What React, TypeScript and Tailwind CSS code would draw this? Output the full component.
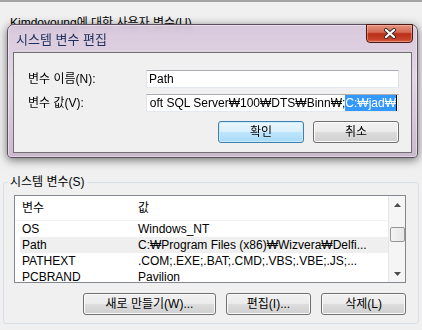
import React from 'react'

type Row = { name: string; value: string; selected?: boolean }

const rows: Row[] = [
  { name: 'OS', value: 'Windows_NT' },
  { name: 'Path', value: 'C:₩Program Files (x86)₩Wizvera₩Delfi...', selected: true },
  { name: 'PATHEXT', value: '.COM;.EXE;.BAT;.CMD;.VBS;.VBE;.JS;...' },
  { name: 'PCBRAND', value: 'Pavilion' },
]

function WinButton({ label, primary }: { label: string; primary?: boolean }) {
  return (
    <button
      className={`block h-[22px] w-full whitespace-nowrap rounded-[3px] border text-[12px] leading-[20px] text-black ${
        primary
          ? 'border-[#3c7fb1] bg-[linear-gradient(to_bottom,#eaf6fd_0%,#d9f0fc_50%,#bee6fd_50%,#a7d9f5_100%)] shadow-[inset_0_0_0_1px_#cdeafb]'
          : 'border-[#707070] bg-[linear-gradient(to_bottom,#f2f2f2_0%,#ebebeb_50%,#dddddd_50%,#cfcfcf_100%)] shadow-[inset_0_0_0_1px_#fbfbfb]'
      }`}
    >
      {label}
    </button>
  )
}

function Arrow({ up }: { up?: boolean }) {
  return (
    <svg width="7" height="4" viewBox="0 0 7 4">
      <polygon points={up ? '0,4 7,4 3.5,0' : '0,0 7,0 3.5,4'} fill="#4d4d4d" />
    </svg>
  )
}

export default function App() {
  return (
    <div className="relative w-[422px] h-[330px] overflow-hidden bg-[#f0f0f0] font-['Liberation_Sans','Noto_Sans_CJK_KR',sans-serif] text-[12px] text-black">
      <div className="h-[2px] bg-[#a3a3a3]" />
      <div className="pl-[10px] pt-[13px] leading-[16px]">Kimdoyoung에 대한 사용자 변수(U)</div>

      {/* System variables group */}
      <fieldset className="mx-[3px] mt-[144px] rounded-[3px] border border-[#d5dfe5] px-[10px] pb-[8px]">
        <legend className="ml-[-6px] px-[2px] leading-[14px]">시스템 변수(S)</legend>

        <div className="mt-[6px] flex h-[88px] w-[392px] border border-[#828790] bg-white">
          <div className="flex-1 overflow-hidden">
            <div className="flex h-[25px] items-center border-b border-[#f2f2f2]">
              <div className="w-[123px] pl-[7px]">변수</div>
              <div>값</div>
            </div>
            {rows.map((r) => (
              <div
                key={r.name}
                className={`ml-[5px] flex h-[16px] items-center leading-[16px] ${r.selected ? 'bg-[#efefef]' : ''}`}
              >
                <div className="w-[118px] pl-[2px]">{r.name}</div>
                <div className="whitespace-nowrap">{r.value}</div>
              </div>
            ))}
          </div>

          {/* Scrollbar */}
          <div className="flex w-[17px] flex-col border-l border-[#e6e6e6] bg-[#f5f5f5]">
            <div className="flex h-[17px] items-center justify-center">
              <Arrow up />
            </div>
            <div className="flex-1">
              <div className="ml-[1px] mt-[14px] h-[15px] w-[15px] rounded-[2px] border border-[#979797] bg-[linear-gradient(to_right,#f3f3f3,#e6e6e6)]" />
            </div>
            <div className="flex h-[17px] items-center justify-center">
              <Arrow />
            </div>
          </div>
        </div>

        <div className="mt-[10px] flex justify-end gap-[10px] pr-[2px]">
          <div className="w-[133px] shrink-0">
            <WinButton label="새로 만들기(W)..." />
          </div>
          <div className="w-[85px] shrink-0">
            <WinButton label="편집(I)..." />
          </div>
          <div className="w-[85px] shrink-0">
            <WinButton label="삭제(L)" />
          </div>
        </div>
      </fieldset>

      {/* Edit dialog overlay */}
      <div className="absolute left-[7px] top-[24px] w-[411px] rounded-t-[7px] rounded-b-[4px] border border-[#5e4f60] bg-[linear-gradient(to_bottom,rgba(212,194,216,0.88),rgba(224,211,227,0.9)_40%,rgba(200,180,203,0.93))] shadow-[0_2px_10px_rgba(0,0,0,0.55)] backdrop-blur-[2px]">
        <div className="rounded-t-[6px] rounded-b-[3px] border border-white/40">
          <div className="flex h-[26px] items-start justify-between">
            <div className="pl-[7px] pt-[6px] text-[13px] leading-[16px] text-[#1e2f5e]">시스템 변수 편집</div>
            <div className="mr-[3px] mt-[-2px] flex h-[19px] w-[47px] items-center justify-center rounded-b-[4px] border border-[#4a1810] bg-[linear-gradient(to_bottom,#e49482_0%,#d56a52_42%,#b92e16_52%,#c8432a_85%,#d8654a_100%)] shadow-[inset_0_0_0_1px_rgba(255,200,190,0.45)]">
              <svg width="14" height="11" viewBox="0 0 14 11">
                <path d="M3 2 L11 9 M11 2 L3 9" stroke="#3b2a2a" strokeWidth="4" strokeLinecap="round" />
                <path d="M3 2 L11 9 M11 2 L3 9" stroke="#ffffff" strokeWidth="2.2" strokeLinecap="round" />
              </svg>
            </div>
          </div>

          <div className="mb-[3px] ml-[4px] mr-[4px] h-[101px] border border-[#6f6f6f] bg-[#f0f0f0] pl-[14px] pr-[12px] pt-[17px]">
            <div className="flex h-[18px] items-center">
              <div className="w-[118px]">변수 이름(N):</div>
              <div className="h-[18px] flex-1 border border-[#abadb3] border-l-[#e2e3ea] border-r-[#dbdfe6] border-b-[#e3e9ef] bg-white pl-[2px] leading-[16px]">
                Path
              </div>
            </div>
            <div className="mt-[6px] flex h-[18px] items-center">
              <div className="w-[118px]">변수 값(V):</div>
              <div className="flex h-[18px] flex-1 justify-end overflow-hidden border border-[#abadb3] border-l-[#e2e3ea] border-r-[#dbdfe6] border-b-[#e3e9ef] bg-white leading-[16px]">
                <span className="whitespace-nowrap">oft SQL Server₩100₩DTS₩Binn₩;</span>
                <span className="whitespace-nowrap bg-[#3399ff] text-white">C:₩jad₩</span>
                <span className="mr-[1px] w-[1px] bg-black" />
              </div>
            </div>
            <div className="mt-[9px] flex justify-end gap-[9px]">
              <div className="w-[86px]">
                <WinButton label="확인" primary />
              </div>
              <div className="w-[86px]">
                <WinButton label="취소" />
              </div>
            </div>
          </div>
        </div>
      </div>
    </div>
  )
}
